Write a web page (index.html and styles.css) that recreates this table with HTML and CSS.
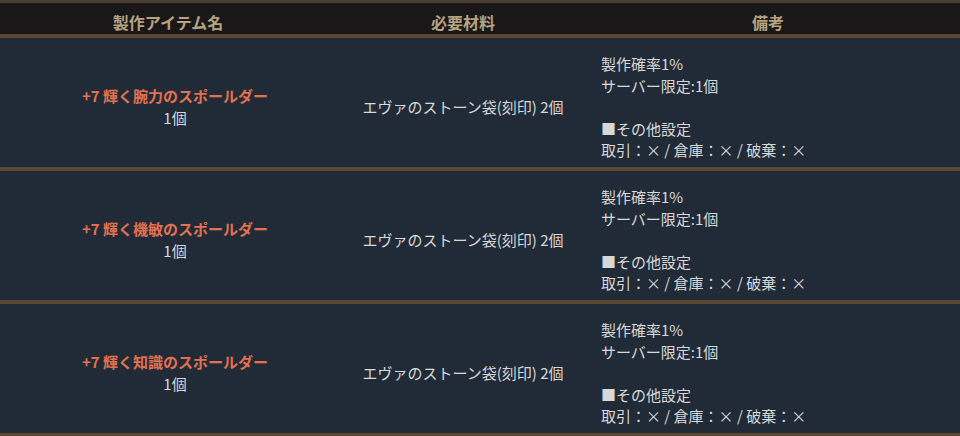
FILE: index.html
```html
<!DOCTYPE html>
<html lang="ja">
<head>
    <meta charset="UTF-8">
    <meta name="viewport" content="width=device-width, initial-scale=1.0">
    <title>製作リスト</title>
    <link rel="stylesheet" href="styles.css">
</head>
<body>
    <table class="craft-table">
        <colgroup>
            <col class="col-item">
            <col class="col-material">
            <col class="col-note">
        </colgroup>
        <thead>
            <tr>
                <th class="th-item">製作アイテム名</th>
                <th>必要材料</th>
                <th>備考</th>
            </tr>
        </thead>
        <tbody>
            <tr>
                <td class="item"><span class="item-name">+7 輝く腕力のスポールダー</span><br>1個</td>
                <td class="material">エヴァのストーン袋(刻印) 2個</td>
                <td class="note">製作確率1%<br>サーバー限定:1個<br><br>■その他設定<br>取引：× / 倉庫：× / 破棄：×</td>
            </tr>
            <tr>
                <td class="item"><span class="item-name">+7 輝く機敏のスポールダー</span><br>1個</td>
                <td class="material">エヴァのストーン袋(刻印) 2個</td>
                <td class="note">製作確率1%<br>サーバー限定:1個<br><br>■その他設定<br>取引：× / 倉庫：× / 破棄：×</td>
            </tr>
            <tr>
                <td class="item"><span class="item-name">+7 輝く知識のスポールダー</span><br>1個</td>
                <td class="material">エヴァのストーン袋(刻印) 2個</td>
                <td class="note">製作確率1%<br>サーバー限定:1個<br><br>■その他設定<br>取引：× / 倉庫：× / 破棄：×</td>
            </tr>
        </tbody>
    </table>
</body>
</html>
```

FILE: styles.css
```css
:root {
    --head-bg: #191717;
    --head-text: #b5a381;
    --row-bg: #212b37;
    --line: #5b4832;
    --text: #d8d8d8;
    --item: #e2714f;
}
html, body {
    margin: 0;
    padding: 0;
    background: var(--row-bg);
}
body {
    font-family: "Noto Sans CJK JP", "Noto Sans", sans-serif;
    font-size: 15px;
    color: var(--text);
}
.craft-table {
    width: 960px;
    border-collapse: collapse;
    table-layout: fixed;
}
.col-item {
    width: 350px;
}
.col-material {
    width: 226px;
}
.col-note {
    width: 384px;
}
th {
    background: var(--head-bg);
    color: var(--head-text);
    font-size: 16px;
    font-weight: bold;
    line-height: 22px;
    padding: 8px 10px 1px;
    border-top: 3px solid #4a3f35;
    border-bottom: 4px solid var(--line);
    text-align: center;
}
.th-item {
    padding-right: 24px;
}
td {
    background: var(--row-bg);
    line-height: 21.6px;
    padding: 15px 10px 6px;
    vertical-align: middle;
    border-bottom: 4px solid var(--line);
}
.item, .material {
    text-align: center;
}
.item-name {
    color: var(--item);
    font-weight: bold;
}
.note {
    padding-left: 25px;
    text-align: left;
}
```
